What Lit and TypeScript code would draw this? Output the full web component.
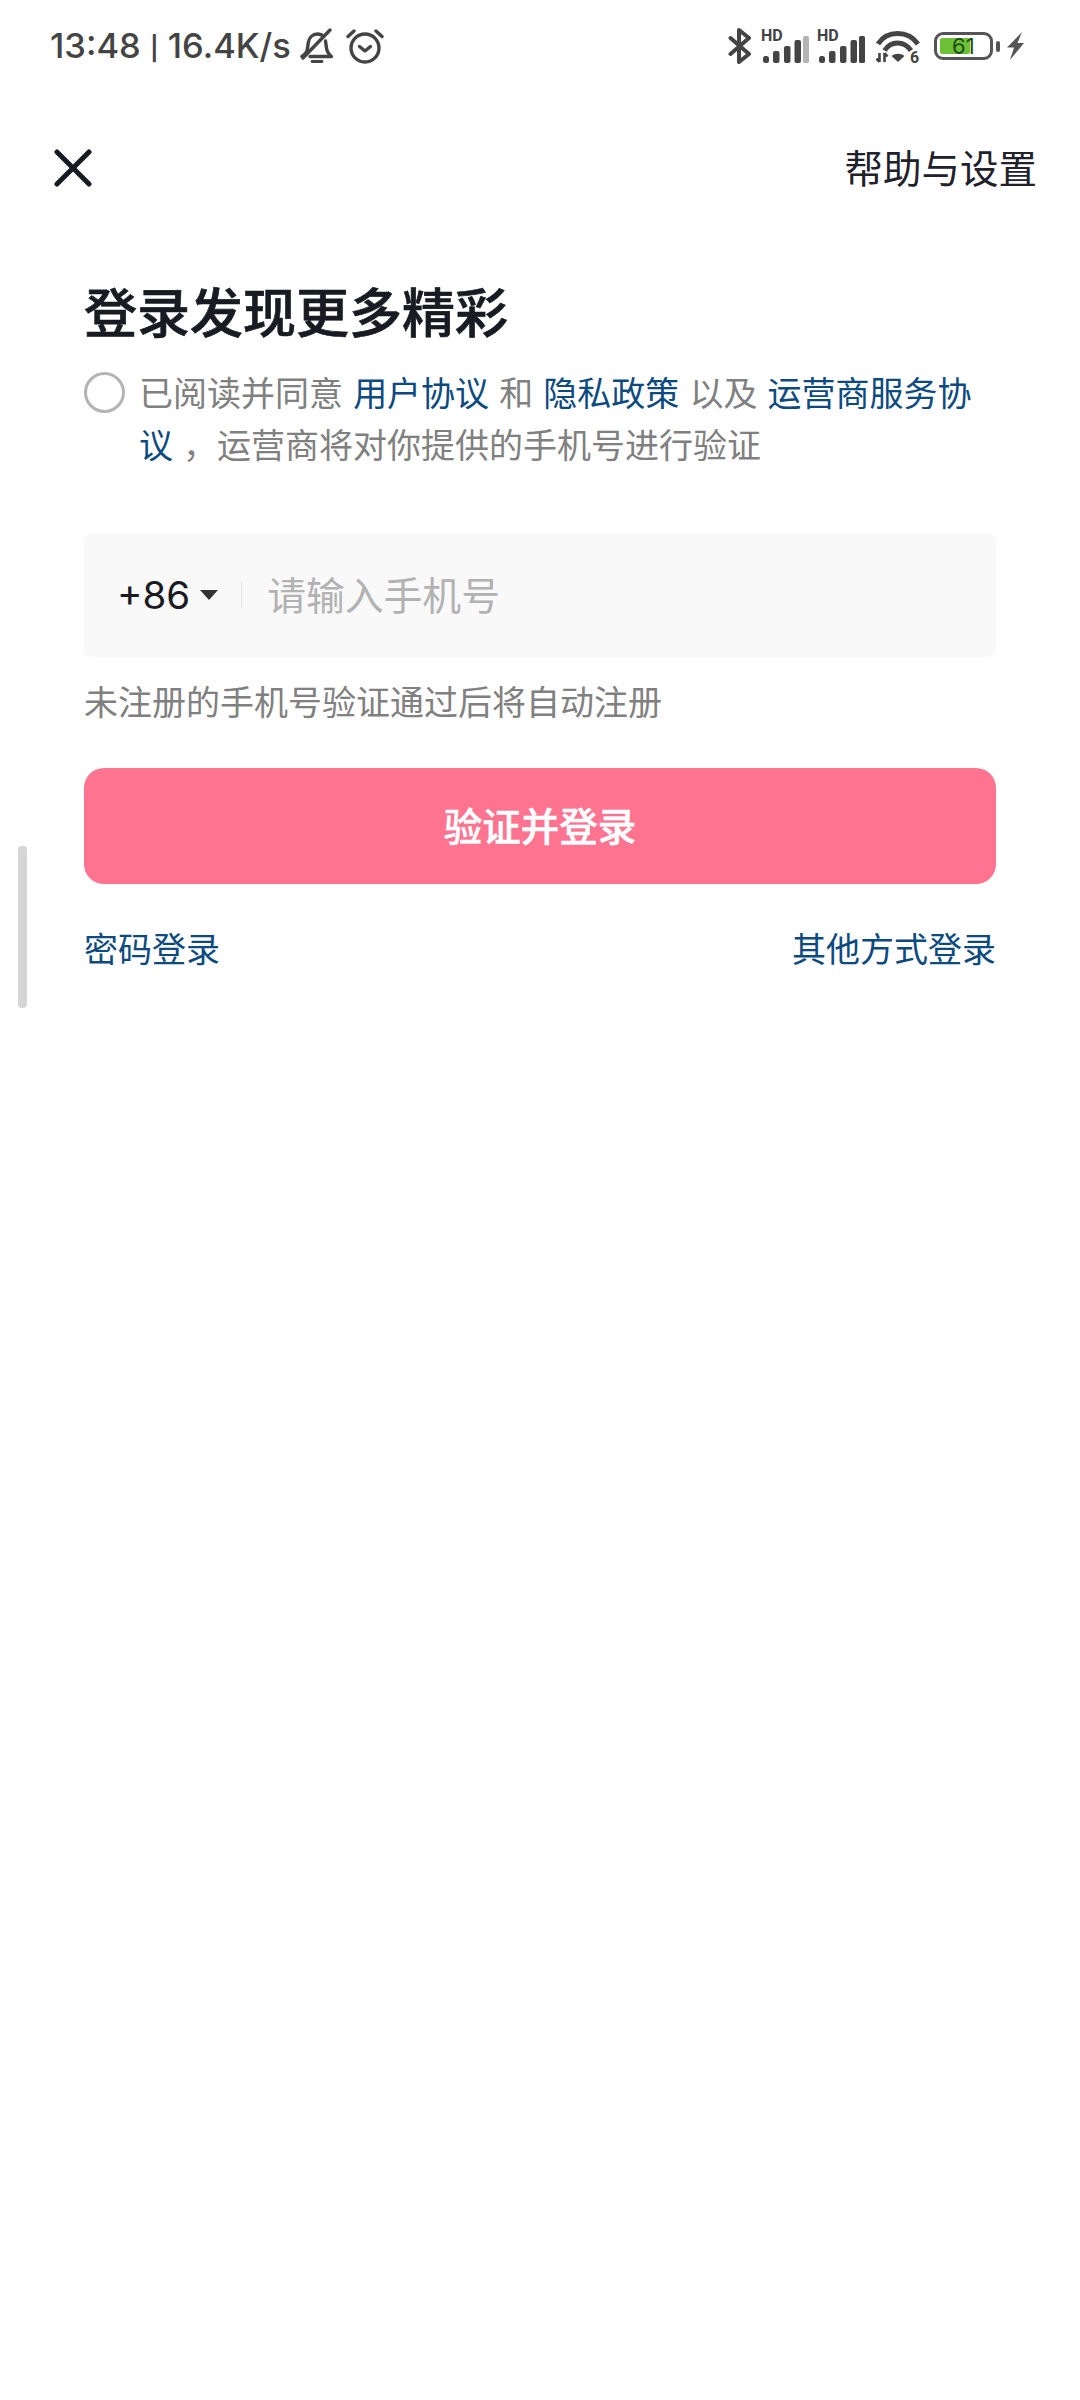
import { LitElement, html, css } from "lit";
import { customElement } from "lit/decorators.js";

const signal = (lastOpacity: number) => html`
  <span class="sig">
    <span class="hd">HD</span>
    <svg width="46" height="28" viewBox="0 0 46 28">
      <rect x="0" y="20" width="6" height="7" rx="2.500" fill="#444"/>
      <rect x="10" y="15" width="6.500" height="12" rx="2" fill="#444"/>
      <rect x="21" y="10" width="6.500" height="17" rx="2" fill="#444"/>
      <rect x="31.500" y="4" width="6.500" height="23" rx="2" fill="#444"/>
      <rect x="40" y="0" width="6" height="27" rx="1.500" fill="#444" opacity="${lastOpacity}"/>
    </svg>
  </span>`;

@customElement("app-root")
export class AppRoot extends LitElement {
  static styles = css`
    :host {
      display: block;
      position: relative;
      width: 1080px;
      height: 2400px;
      background: #fff;
      font-family: "Noto Sans CJK SC", Roboto, sans-serif;
      overflow: hidden;
    }
    .status {
      height: 76px;
      padding: 28px 56px 0 50px;
      box-sizing: border-box;
      display: flex;
      justify-content: space-between;
      align-items: flex-start;
      color: #444;
    }
    .left, .right { display: flex; align-items: center; height: 36px; }
    .time {
      font: 500 34.500px/36px Inter, sans-serif;
      white-space: nowrap;
      color: #444;
    }
    .sep { font: 700 34px/36px Roboto, sans-serif; }
    .bell { margin-left: 9px; }
    .alarm { margin-left: 12px; }
    .sig { position: relative; display: block; width: 46px; height: 28px; margin-left: 11px; margin-top: 8px; }
    .sig + .sig { margin-left: 10px; }
    .hd {
      position: absolute;
      left: -2px;
      top: -7px;
      font: 700 16px/14px Roboto, sans-serif;
      color: #444;
    }
    .wifi { margin-left: 11px; }
    .batt { margin-left: 14px; position: relative; display: block; width: 59px; height: 28px; border: 3px solid #555; border-radius: 9px; box-sizing: border-box; }
    .fill { position: absolute; left: 3px; top: 3px; bottom: 3px; width: 30px; background: #6cc136; border-radius: 2px; }
    .num { position: absolute; left: 15px; top: 0; font: 400 22px/22px Inter, sans-serif; color: #1c4a14; }
    .nub { width: 4px; height: 11px; margin-left: 3px; background: #555; border-radius: 2px; }
    .bolt { margin-left: 7px; }

    .nav {
      display: flex;
      justify-content: space-between;
      align-items: center;
      height: 56px;
      margin-top: 64px;
      padding: 0 43px 0 54px;
    }
    .help { font-size: 38.500px; line-height: 52px; color: #20212a; height: 56px; display: block; }
    .close { display: block; }

    .main { padding: 0 84px; }
    h1 {
      margin: 81px 0 0;
      font-size: 53px;
      line-height: 66px;
      font-weight: 500;
      -webkit-text-stroke: 0.7px #191a22;
      color: #191a22;
    }
    .agree { display: flex; margin-top: 23px; }
    .check {
      flex: none;
      width: 41px;
      height: 41px;
      margin-top: 6px;
      border: 3.500px solid #b4b4b4;
      border-radius: 50%;
      box-sizing: border-box;
    }
    .agree p {
      margin: 0 0 0 14px;
      width: 850px;
      font-size: 34px;
      line-height: 52px;
      color: #808080;
      word-spacing: 2.500px;
    }
    .link { color: #0d4a80; }
    .field {
      display: flex;
      align-items: center;
      height: 124px;
      margin-top: 63px;
      padding-left: 33px;
      background: #f9f9f9;
      border-radius: 8px;
    }
    .code { font: 400 38.500px/50px Inter, sans-serif; color: #191a22; }
    .tri { margin-left: 10px; }
    .div { width: 1px; height: 26px; background: #e4e4e4; margin-left: 23px; }
    .ph { margin: 0 0 5px 25px; font-size: 38.800px; color: #b2b2b2; line-height: 50px; }
    .hint { margin-top: 20px; font-size: 34px; line-height: 48px; color: #808080; }
    .btn {
      margin-top: 43px;
      height: 116px;
      box-sizing: border-box;
      padding-bottom: 5px;
      display: flex;
      align-items: center;
      justify-content: center;
      background: #fe7390;
      border-radius: 20px;
      color: #fff;
      font-size: 38.500px;
      font-weight: 500;
      -webkit-text-stroke: 0.5px #fff;
    }
    .alts {
      display: flex;
      justify-content: space-between;
      margin-top: 40px;
      font-size: 34px;
      line-height: 48px;
      color: #0d4a80;
    }
    .scroll {
      position: absolute;
      left: 18px;
      top: 846px;
      width: 9px;
      height: 162px;
      background: #d5d5d5;
      border-radius: 4px;
    }
  `;

  render() {
    return html`
      <div class="status">
        <div class="left">
          <span class="time">13:48 <span class="sep">|</span> 16.4K/s</span>
          <svg class="bell" width="34" height="36" viewBox="0 0 34 36" fill="none" stroke="#444" stroke-width="3.400" stroke-linecap="round" stroke-linejoin="round">
            <path d="M2 28.500c3-2 5-4 5.500-8l.8-6c.8-5 4.500-8.500 9-8.500 2.500 0 5 1 6.500 2.500"/>
            <path d="M25.500 13l1 7c.5 4 2.500 6.500 5 8.500H10"/>
            <path d="M30 2 3 30"/>
            <path d="M12 33.500h10" stroke-width="2.800"/>
          </svg>
          <svg class="alarm" width="38" height="36" viewBox="0 0 38 36" fill="none" stroke="#444" stroke-width="3.400" stroke-linecap="round" stroke-linejoin="round">
            <circle cx="19" cy="20" r="14"/>
            <path d="M13.500 18.500 19 23l5.500-4.500"/>
            <path d="M2 8.500 8 3M36 8.500 30 3"/>
          </svg>
        </div>
        <div class="right">
          <svg width="24" height="36" viewBox="0 0 24 36" fill="none" stroke="#444" stroke-width="4" stroke-linejoin="round" stroke-linecap="round">
            <path d="M2.500 10 21 26l-10 8V2l10 8L2.500 26"/>
          </svg>
          ${signal(0.4)}
          ${signal(1)}
          <svg class="wifi" width="44" height="34" viewBox="0 0 44 34">
            <g fill="none" stroke="#444" stroke-width="5">
              <path d="M2 15C11 1 32 1 42 15"/>
              <path d="M8.500 21.500C15 11.500 28 11.500 35 21.500"/>
            </g>
            <path d="M15.500 27c4-3 9-3 13 0l-6.500 6z" fill="#444"/>
            <path d="M3.500 24v9M.5 29.500l3 3.500M8.500 33v-9M11.500 27.500l-3-3.500" fill="none" stroke="#444" stroke-width="2.600"/>
            <text x="34" y="33.500" font-family="Roboto, sans-serif" font-weight="700" font-size="16" fill="#444">6</text>
          </svg>
          <span class="batt"><span class="fill"></span><span class="num">61</span></span>
          <span class="nub"></span>
          <svg class="bolt" width="17" height="28" viewBox="0 0 17 28"><path d="M15 0 0 15.500h7L3 28 17 11h-6.500L15 0z" fill="#555"/></svg>
        </div>
      </div>

      <div class="nav">
        <svg class="close" width="38" height="38" viewBox="0 0 38 38" fill="none" stroke="#191a22" stroke-width="5" stroke-linecap="round">
          <path d="M3 3 35 35M35 3 3 35"/>
        </svg>
        <span class="help">帮助与设置</span>
      </div>

      <div class="main">
        <h1>登录发现更多精彩</h1>
        <div class="agree">
          <span class="check"></span>
          <p>已阅读并同意 <span class="link">用户协议</span> 和 <span class="link">隐私政策</span> 以及 <span class="link">运营商服务协议</span> ，运营商将对你提供的手机号进行验证</p>
        </div>
        <div class="field">
          <span class="code">+86</span>
          <svg class="tri" width="18" height="10" viewBox="0 0 18 10"><path d="M0 0h18l-9 10z" fill="#333"/></svg>
          <span class="div"></span>
          <span class="ph">请输入手机号</span>
        </div>
        <div class="hint">未注册的手机号验证通过后将自动注册</div>
        <div class="btn">验证并登录</div>
        <div class="alts"><span>密码登录</span><span>其他方式登录</span></div>
      </div>
      <div class="scroll"></div>
    `;
  }
}
